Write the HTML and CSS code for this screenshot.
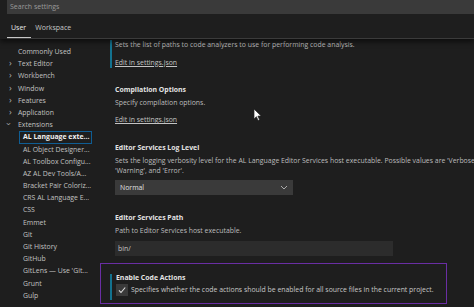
FILE: index.html
```html
<!DOCTYPE html>
<html lang="en">
<head>
    <meta charset="UTF-8">
    <title>Settings</title>
    <link rel="stylesheet" href="styles.css">
</head>
<body>

    <!-- Header -->
    <div class="header">
        <div class="search">Search settings</div>
        <div class="tabs">
            <div class="tab active">User</div>
            <div class="tab">Workspace</div>
        </div>
    </div>

    <div class="main">

        <!-- Tree -->
        <div class="tree">
            <div class="node">Commonly Used</div>
            <div class="node"><span class="chev">›</span>Text Editor</div>
            <div class="node"><span class="chev">›</span>Workbench</div>
            <div class="node"><span class="chev">›</span>Window</div>
            <div class="node"><span class="chev">›</span>Features</div>
            <div class="node"><span class="chev">›</span>Application</div>
            <div class="node"><span class="chev down">›</span>Extensions</div>
            <div class="node child selected">AL Language exte...</div>
            <div class="node child">AL Object Designer...</div>
            <div class="node child">AL Toolbox Configu...</div>
            <div class="node child">AZ AL Dev Tools/A...</div>
            <div class="node child">Bracket Pair Coloriz...</div>
            <div class="node child">CRS AL Language E...</div>
            <div class="node child">CSS</div>
            <div class="node child">Emmet</div>
            <div class="node child">Git</div>
            <div class="node child">Git History</div>
            <div class="node child">GitHub</div>
            <div class="node child">GitLens — Use 'Git...</div>
            <div class="node child">Grunt</div>
            <div class="node child">Gulp</div>
        </div>

        <!-- Settings -->
        <div class="settings">
            <div class="setting modified first">
                <div class="desc">Sets the list of paths to code analyzers to use for performing code analysis.</div>
                <a class="link">Edit in settings.json</a>
            </div>

            <div class="setting">
                <div class="title">Compilation Options</div>
                <div class="desc">Specify compilation options.</div>
                <a class="link">Edit in settings.json</a>
            </div>

            <div class="setting">
                <div class="title">Editor Services Log Level</div>
                <div class="desc wrap">Sets the logging verbosity level for the AL Language Editor Services host executable. Possible values are 'Verbose', 'Normal', 'Warning', and 'Error'.</div>
                <div class="select">
                    <span>Normal</span>
                    <svg width="8" height="5" viewBox="0 0 8 5"><path d="M1 1l3 3 3-3" fill="none" stroke="#b8b8b8" stroke-width="0.9"/></svg>
                </div>
            </div>

            <div class="setting">
                <div class="title">Editor Services Path</div>
                <div class="desc">Path to Editor Services host executable.</div>
                <div class="input">bin/</div>
            </div>

            <div class="focus-box">
                <div class="setting modified">
                    <div class="title">Enable Code Actions</div>
                    <div class="check-row">
                        <div class="checkbox">
                            <svg width="10" height="10" viewBox="0 0 10 10"><path d="M2 5.3l2 2.2 4.2-5" fill="none" stroke="#e0e0e0" stroke-width="1.1"/></svg>
                        </div>
                        <span class="desc">Specifies whether the code actions should be enabled for all source files in the current project.</span>
                    </div>
                </div>
            </div>
        </div>
    </div>

    <!-- mouse pointer over the page -->
    <svg class="cursor" width="9" height="13" viewBox="0 0 9 13">
        <path d="M1 1v10l2.4-2.3 1.7 3.8 1.5-.7-1.7-3.7h3.3z" fill="#fff" stroke="#222" stroke-width="0.7"/>
    </svg>

</body>
</html>
```

FILE: styles.css
```css
body {
    margin: 0;
    background-color: #1e1e1e;
    font-family: "Open Sans", "Noto Sans", sans-serif;
    font-size: 6.9px;
    color: #bdbdbd;
    width: 474px;
    height: 307px;
    overflow: hidden;
    position: relative;
}

.header {
    position: relative;
    z-index: 2;
    background-color: #1e1e1e;
    box-shadow: 0 3px 5px rgba(0, 0, 0, 0.55);
}

.search {
    margin-left: 7px;
    height: 14px;
    line-height: 14px;
    padding-left: 3px;
    background-color: #3a3a3a;
    color: #9a9a9a;
    font-size: 7px;
}

.tabs {
    display: flex;
    gap: 4px;
    margin-left: 7px;
    height: 24px;
    border-bottom: 1px solid #3b3b3b;
}
.tab {
    font-size: 7px;
    padding-top: 6px;
    line-height: 16px;
    color: #c8c8c8;
    border-bottom: 1px solid transparent;
}
.tab.active {
    color: #e8e8e8;
    border-bottom-color: #c8c8c8;
    padding-left: 4px;
    padding-right: 5px;
}

.main {
    display: flex;
}

.tree {
    width: 100px;
    padding-top: 7px;
    flex-shrink: 0;
}
.node {
    height: 12.2px;
    line-height: 12.2px;
    padding-left: 18px;
    white-space: nowrap;
    color: #c2c2c2;
    position: relative;
}
.chev {
    position: absolute;
    left: 9px;
    top: -1px;
    font-size: 9px;
    color: #b0b0b0;
}
.chev.down {
    transform: rotate(90deg);
    left: 8px;
}
.node.child {
    padding-left: 23px;
}
.node.selected {
    font-weight: bold;
    color: #f0f0f0;
}
.node.selected::before {
    content: "";
    position: absolute;
    left: 19px;
    top: 0;
    width: 71px;
    height: 11px;
    border: 1px solid #0f5d93;
}

.settings {
    width: 420px;
    flex-shrink: 0;
}

.setting {
    padding-left: 15px;
    margin-bottom: 17px;
    position: relative;
}
.setting.modified::before {
    content: "";
    position: absolute;
    left: 10px;
    top: 4px;
    bottom: 0;
    width: 2px;
    background-color: #13728f;
}
.setting.first {
    margin-top: 1px;
    margin-bottom: 16px;
}
.setting.first::before {
    top: 0;
}

.title {
    font-weight: bold;
    color: #e4e4e4;
    line-height: 12px;
    margin-top: 1px;
}

.desc {
    line-height: 9.6px;
    white-space: nowrap;
}
.desc.wrap {
    white-space: normal;
}
.setting .desc {
    margin-top: 2px;
}
.setting.first .desc {
    margin-top: 0;
}

.link {
    display: block;
    color: #c4c4c4;
    text-decoration: underline;
    line-height: 10px;
    margin-top: 8px;
}

.select {
    width: 178px;
    height: 15px;
    margin-top: 5px;
    background-color: #3a3a3a;
    display: flex;
    align-items: center;
    justify-content: space-between;
    padding: 0 5px;
    box-sizing: border-box;
    color: #e0e0e0;
}

.input {
    width: 278px;
    height: 15px;
    line-height: 15px;
    margin-top: 5px;
    background-color: #2c2c2c;
    padding-left: 3px;
    box-sizing: border-box;
    color: #c8c8c8;
}

.focus-box {
    width: 347px;
    height: 41px;
    margin-top: -10px;
    border: 1.5px solid #6a2ea4;
    box-sizing: border-box;
    padding-top: 8px;
}
.focus-box .setting {
    margin-bottom: 0;
    padding-bottom: 4px;
}
.focus-box .setting::before {
    left: 9px;
    top: 2px;
}
.focus-box .title {
    margin-top: 0;
}

.check-row {
    display: flex;
    align-items: center;
    gap: 3px;
    margin-top: 0;
}
.checkbox {
    width: 12px;
    height: 12px;
    background-color: #3a3a3a;
    display: flex;
    align-items: center;
    justify-content: center;
}
.check-row .desc {
    margin-top: 0;
    color: #c8c8c8;
}

.cursor {
    position: absolute;
    left: 253px;
    top: 108px;
    z-index: 3;
}
```
